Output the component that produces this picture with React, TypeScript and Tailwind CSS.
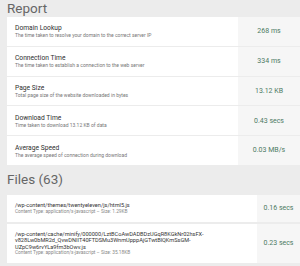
import React from "react";

const metrics = [
  { t: "Domain Lookup", d: "The time taken to resolve your domain to the correct server IP", v: "268 ms" },
  { t: "Connection Time", d: "The time taken to establish a connection to the web server", v: "334 ms" },
  { t: "Page Size", d: "Total page size of the website downloaded in bytes", v: "13.12 KB" },
  { t: "Download Time", d: "Time taken to download 13.12 KB of data", v: "0.43 secs" },
  { t: "Average Speed", d: "The average speed of connection during download", v: "0.03 MB/s" },
];

const files = [
  { p: "/wp-content/themes/twentyeleven/js/html5.js", c: "Content Type: application/x-javascript \u2013 Size: 1.29KB", v: "0.16 secs" },
  {
    p: "/wp-content/cache/minify/000000/LztBCoAwDADBDzUGqR8KGkNr02hsFX-v828Lw0bMR2d_QvwDNIIT40FTDSMu3WnmUpppAjGTwtBlQKmSsGM-UZpC9w6rvYLa9fm3bOwv.js",
    c: "Content Type: application/x-javascript \u2013 Size: 35.18KB",
    v: "0.23 secs",
  },
];

export default function App() {
  return (
    <div className="w-[300px] h-[266px] overflow-hidden bg-[#ececec] pl-[7px]" style={{ fontFamily: "Roboto, 'Liberation Sans', sans-serif" }}>
      <div className="h-[17px] flex items-end">
        <h2 className="text-[13.5px] leading-[17px] text-[#666] font-normal">Report</h2>
      </div>
      <div className="flex flex-col gap-[1px] bg-[#ececec]">
        {metrics.map((m) => (
          <div key={m.t} className="flex h-[28.8px] bg-white">
            <div className="flex-1 flex flex-col justify-center pl-[8px]">
              <div className="text-[6.7px] leading-[8px] text-[#2f2f2f]">{m.t}</div>
              <div className="text-[5px] leading-[6px] text-[#777] whitespace-nowrap">{m.d}</div>
            </div>
            <div className="w-[62px] bg-[#f6f6f6] flex items-center justify-center text-[7px] text-[#4d7a63]">{m.v}</div>
          </div>
        ))}
      </div>
      <div className="h-[30px] flex items-center">
        <h2 className="text-[13.5px] leading-[17px] text-[#666] font-normal">Files (63)</h2>
      </div>
      <div className="flex flex-col gap-[2px]">
        {files.map((f) => (
          <div key={f.v} className="flex bg-white">
            <div className="flex-1 min-w-0 flex flex-col justify-center pl-[8px] pr-[4px] py-[7px]">
              <div className="text-[5.6px] leading-[6.6px] text-[#333] break-words">{f.p}</div>
              <div className="text-[4.8px] leading-[6px] text-[#888] whitespace-nowrap">{f.c}</div>
            </div>
            <div className="w-[43px] shrink-0 bg-[#f6f6f6] flex items-center justify-center text-[7px] text-[#4d7a63]">{f.v}</div>
          </div>
        ))}
      </div>
    </div>
  );
}
